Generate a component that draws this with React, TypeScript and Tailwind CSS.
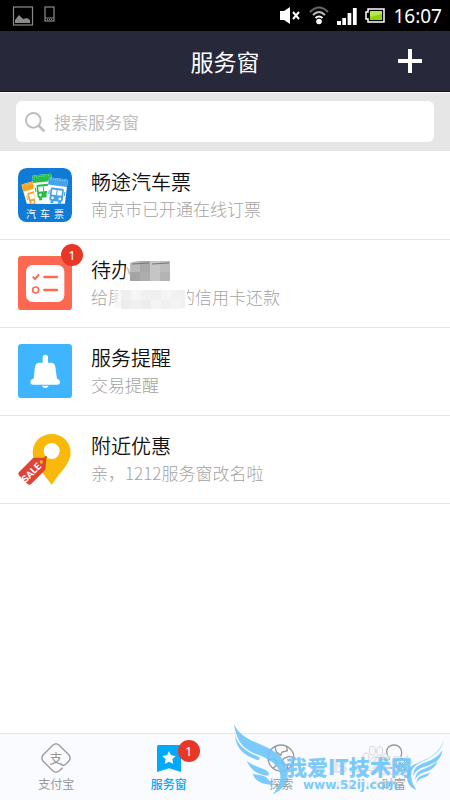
import {useState} from "react";
import type {ReactNode} from "react";

type Service = {
  id: string;
  title: ReactNode;
  detail: ReactNode;
  icon: ReactNode;
  badge?: number;
};

type Tab = {
  id: string;
  label: string;
  icon: ReactNode;
  badge?: number;
};

function StatusBar() {
  return (
    <div className="flex h-[31px] items-center bg-black pr-2 pl-3 text-white">
      <svg width="22" height="20" viewBox="0 0 22 20" aria-hidden="true">
        <rect x="1.5" y="1" width="19" height="18" fill="none" stroke="#8b8b8b" strokeWidth="1.2" />
        <path d="M3 17v-3l4-5 4 4 4-1 3 2v3z" fill="#8b8b8b" />
      </svg>
      <svg className="mb-1 ml-2.5" width="12" height="16" viewBox="0 0 12 16" aria-hidden="true">
        <rect x="1" y="1" width="9" height="14" fill="none" stroke="#8b8b8b" strokeWidth="1.2" />
        <path d="M1 12h9M3 13.5h1M5 13.5h1M7 13.5h1" stroke="#8b8b8b" />
      </svg>

      <div className="ml-auto flex items-center gap-2">
        <svg width="22" height="19" viewBox="0 0 22 19" aria-hidden="true">
          <path d="M1 5h4l6-4v17l-6-4H1z" fill="#fff" />
          <path d="M14 6l6 7M20 6l-6 7" stroke="#fff" strokeWidth="2" />
        </svg>
        <svg width="20" height="19" viewBox="0 0 20 19" fill="none" aria-hidden="true">
          <path d="M1 6q9-9 18 0" stroke="#686868" strokeWidth="2" />
          <path d="M4 9q6-6 12 0" stroke="#bbb" strokeWidth="2" />
          <path d="M6.5 12q3.5-3 7 0" stroke="#fff" strokeWidth="2" />
          <circle cx="10" cy="15.5" r="2.8" fill="#fff" />
        </svg>
        <svg width="20" height="18" viewBox="0 0 20 18" fill="#fff" aria-hidden="true">
          <path d="M0 14h4v4H0zM5.3 11H9v7H5.3zM10.6 6h3.7v12h-3.7zM15.9 1h3.8v17h-3.8z" />
        </svg>
        <svg width="20" height="15" viewBox="0 0 20 15" aria-hidden="true">
          <path d="M3 1h16v13H3v-3H1V4h2z" fill="none" stroke="#fff" strokeWidth="1.5" />
          <path d="M5 3h12v9H5z" fill="#8fd30c" />
          <path d="M5 3h12v3L5 9z" fill="#b5e654" />
        </svg>
        <time className="font-['Noto_Sans',sans-serif] text-[19px] leading-6">16:07</time>
      </div>
    </div>
  );
}

function Badge({count}: {count: number}) {
  return (
    <span className="flex size-[22px] items-center justify-center rounded-full bg-[#e73827] font-['Noto_Sans',sans-serif] text-[13px] leading-4 font-normal text-white">
      {count}
    </span>
  );
}

function TicketBus({color, x, y, turn}: {color: string; x: number; y: number; turn: number}) {
  return (
    <g transform={`translate(${x} ${y}) rotate(${turn})`}>
      <path d="M0 4q0-4 4-4h49q4 0 4 4v92H0z" fill="#fff" />
      <path d="M0 4q0-4 4-4h49q4 0 4 4v18H0z" fill={color} />
      <path d="M5 5h48" stroke="#fff" strokeWidth="2" strokeDasharray="2 5" />
      <rect x="9" y="29" width="40" height="40" rx="5" fill={color} />
      <path d="M14 35h30v15H14z" fill="#fff" />
      <path d="M29 35v15" stroke={color} strokeWidth="3" />
      <circle cx="18" cy="60" r="4" fill="#fff" />
      <circle cx="40" cy="60" r="4" fill="#fff" />
      <path d="M13 69h9v7h-9zM36 69h9v7h-9zM4 38h3v12H4zM51 38h3v12h-3z" fill={color} />
    </g>
  );
}

function CoachIcon() {
  return (
    <div className="relative size-[54px]">
      <svg className="size-full" viewBox="0 0 162 162" aria-hidden="true">
        <defs>
          <clipPath id="ticket-area">
            <path d="M0 0h162v107H0z" />
          </clipPath>
        </defs>
        <rect width="162" height="162" rx="26" fill="#107bd7" />
        <g clipPath="url(#ticket-area)">
          <TicketBus color="#f3a51f" x={10} y={50} turn={-16} />
          <TicketBus color="#28bd4a" x={43} y={23} turn={-6} />
          <TicketBus color="#45a3ec" x={93} y={28} turn={7} />
        </g>
      </svg>
      <span className="absolute inset-x-0 bottom-[2px] flex justify-center gap-1 text-[10px] leading-3 text-white">
        <span>汽</span>
        <span>车</span>
        <span>票</span>
      </span>
    </div>
  );
}

function TodoIcon() {
  return (
    <svg className="size-[54px]" viewBox="0 0 162 162" fill="none" aria-hidden="true">
      <rect width="162" height="162" rx="10" fill="#ff6850" />
      <rect x="24" y="27" width="115" height="111" rx="20" fill="#fff" />
      <path d="M44 62l7 7 12-14" stroke="#ff6850" strokeWidth="6" />
      <circle cx="53" cy="102" r="9" stroke="#ff6850" strokeWidth="5" />
      <path d="M79 63h38M79 102h38" stroke="#ff6850" strokeWidth="7" strokeLinecap="round" />
    </svg>
  );
}

function BellIcon() {
  return (
    <svg className="size-[54px]" viewBox="0 0 162 162" fill="#fff" aria-hidden="true">
      <rect width="162" height="162" rx="10" fill="#3fb5ff" />
      <path d="M74 56V40q0-8 8-8t8 8v16h9q11 0 13 12l5 36q8 1 9 9 0 9-9 9H46q-9 0-9-9 1-8 10-9l4-36q2-12 13-12z" />
      <path d="M72 125h20q-3 7-10 7t-10-7z" />
    </svg>
  );
}

function SaleIcon() {
  return (
    <svg className="size-[54px]" viewBox="0 0 162 162" aria-hidden="true">
      <path
        fillRule="evenodd"
        d="M101 6C69 6 44 30 44 62c0 35 36 63 57 97 20-34 57-63 57-97 0-32-25-56-57-56zm0 27a24 24 0 110 48 24 24 0 010-48z"
        fill="#f8b90b"
      />
      <path d="M46 77L4 119q-6 6 0 12l24 24q6 6 12 0l42-42 3-29q0-7-6-7z" fill="#df4335" />
      <path d="M71 91L84 75" stroke="#c94f1c" strokeWidth="6" strokeLinecap="round" />
      <circle cx="70" cy="90" r="5" fill="#f8b90b" />
      <text
        transform="translate(47 129) rotate(-45)"
        textAnchor="middle"
        fill="#fff"
        fontFamily="'Liberation Sans Narrow', Roboto, sans-serif"
        fontSize="29"
        fontWeight="700"
      >
        SALE
      </text>
    </svg>
  );
}

function HiddenTitle() {
  return (
    <span className="relative inline-block">
      待办
      <svg className="absolute top-1 left-[30px]" width="50" height="22" viewBox="0 0 50 22" aria-hidden="true">
        <path d="M5 6q3-3 5-4v20H3z" fill="#fff" fillOpacity="0.7" />
        <path d="M9 3q4-2 10-2v11H9z" fill="#b9b9b9" />
        <path d="M19 1h10v11H19z" fill="#a9a9a9" />
        <path d="M29 1h10v11H29z" fill="#c6c6c6" />
        <path d="M39 1h10v11H39z" fill="#bcbcbc" />
        <path d="M9 12h10v9H9z" fill="#a4a4a4" />
        <path d="M19 12h10v9H19z" fill="#adadad" />
        <path d="M29 12h10v9H29z" fill="#c5c5c5" />
        <path d="M39 12h10v9H39z" fill="#b4b4b4" />
        <path d="M11 4l17-1M31 4l17-1" stroke="#777" />
      </svg>
    </span>
  );
}

function HiddenDetail() {
  return (
    <span className="relative inline-flex">
      <span>给尾</span>
      <span className="w-[53px]" />
      <span>的信用卡还款</span>
      <svg className="absolute top-1 left-[20px]" width="84" height="32" viewBox="0 0 84 32" aria-hidden="true">
        <path d="M8 1h66q4 4 1 19-10 12-35 11Q14 30 4 18 6 10 8 1z" fill="#fff" fillOpacity="0.85" />
        <path d="M2 2h8v18H2z" fill="#f5f5f5" fillOpacity="0.6" />
        <path d="M10 2h10v10H10zM40 2h10v10H40z" fill="#efefef" />
        <path d="M20 2h10v10H20zM50 2h10v10H50z" fill="#f5f5f5" />
        <path d="M30 2h10v10H30zM60 2h10v10H60z" fill="#f1f1f1" />
        <path d="M10 12h10v9H10zM30 12h10v9H30z" fill="#ececec" />
        <path d="M20 12h10v9H20zM50 12h10v9H50z" fill="#f0f0f0" />
        <path d="M40 12h10v9H40zM60 12h10v9H60z" fill="#f4f4f4" />
        <path d="M70 2h4v18h-4z" fill="#f0f0f0" />
      </svg>
    </span>
  );
}

const services: Service[] = [
  {id: "coach", title: "畅途汽车票", detail: "南京市已开通在线订票", icon: <CoachIcon />},
  {id: "todo", title: <HiddenTitle />, detail: <HiddenDetail />, icon: <TodoIcon />, badge: 1},
  {id: "notice", title: "服务提醒", detail: "交易提醒", icon: <BellIcon />},
  {id: "nearby", title: "附近优惠", detail: "亲，1212服务窗改名啦", icon: <SaleIcon />},
];

const tabs: Tab[] = [
  {
    id: "alipay",
    label: "支付宝",
    icon: (
      <svg className="size-[30px]" viewBox="0 0 90 90" fill="none" aria-hidden="true">
        <path
          d="M64 75L54 84q-9 7-18 0L6 54q-7-9 0-18L36 6q9-7 18 0l30 30q7 9 0 18L74 64q-6 5-14 1"
          stroke="currentColor"
          strokeWidth="4"
          strokeLinecap="round"
        />
        <text x="45" y="59" textAnchor="middle" fill="currentColor" fontSize="39">
          支
        </text>
      </svg>
    ),
  },
  {
    id: "service",
    label: "服务窗",
    badge: 1,
    icon: (
      <svg className="h-[27px] w-6" viewBox="0 0 72 81" aria-hidden="true">
        <path d="M5 0h62q5 0 5 5v76L36 70 0 81V5q0-5 5-5z" fill="#02a9f9" />
        <path d="M36 18l6 13 14 2-10 10 3 14-13-7-13 7 3-14-10-10 14-2z" fill="#fff" />
      </svg>
    ),
  },
  {
    id: "explore",
    label: "探索",
    icon: (
      <svg className="size-7" viewBox="0 0 84 84" fill="none" stroke="currentColor" strokeWidth="4" aria-hidden="true">
        <circle cx="42" cy="42" r="39" />
        <path d="M24 8l4 16 13 10 4-10 16-4-2-13M4 48l15-4 12 10-3 10-10 9M80 40l-14-3-15 6-8 10 8 10 11-1-1 13" />
      </svg>
    ),
  },
  {
    id: "wealth",
    label: "财富",
    icon: (
      <svg className="size-7" viewBox="0 0 84 84" fill="none" stroke="currentColor" strokeWidth="4" aria-hidden="true">
        <path d="M29 45C8 18 28 3 42 3c16 0 29 15 20 36M29 45Q9 51 4 72h34" />
        <circle cx="65" cy="61" r="18" />
        <path d="M56 52l9 9 9-9M55 61h20M55 69h20M65 61v15" strokeWidth="3" />
      </svg>
    ),
  },
];

function Watermark() {
  return (
    <div className="pointer-events-none absolute right-0 bottom-0 h-[85px] w-[225px] whitespace-nowrap">
      <svg className="absolute inset-0 size-full" viewBox="0 0 675 255" aria-hidden="true">
        <g fill="#f6f6f8" fillOpacity="0.7" stroke="#d4d5d9" strokeWidth="3">
          <ellipse cx="423" cy="127" rx="9" ry="13" />
          <ellipse cx="442" cy="107" rx="9" ry="13" />
          <ellipse cx="464" cy="108" rx="9" ry="13" />
          <ellipse cx="481" cy="130" rx="9" ry="13" />
          <path d="M452 125q12 0 18 15 17 14 8 25-26 6-52 0-9-11 8-25 6-15 18-15z" />
        </g>
      </svg>
      <span className="absolute top-[39px] left-[108px] font-['Liberation_Sans','Noto_Sans_CJK_SC',sans-serif] text-[21px] leading-6 font-bold text-[#dcdde2]/70">
        Bai 经验
      </span>
      <span className="absolute top-[60px] left-[109px] font-['Liberation_Sans',sans-serif] text-[11px] leading-4 text-[#dcdde2]/80">
        jingyan.baidu
      </span>
      <svg className="absolute inset-0 size-full" viewBox="0 0 675 255" fill="#6cc5fb" fillOpacity="0.9" aria-hidden="true">
        <path d="M27 27c18 40 52 48 90 66 49 20 77 54 70 93-4 26-22 43-44 52 20-24 26-41 22-64-8-31-45-48-80-60C50 98 33 72 27 27z" />
        <path d="M30 60c8 30 32 50 72 66 4 3 2 9-4 9-38-11-66-34-68-75z" />
        <path d="M65 137c15 14 34 18 50 25 13 5 20 12 15 20-30-1-54-17-65-45z" />
        <path d="M83 177c18 3 34 3 43 12 6 8 14 17 22 20-29 1-56-7-65-32z" />
        <path d="M657 77c-9 31-34 49-66 63-29 13-38 32-31 52 2 12 7 23 15 33-22-7-32-26-28-50 8-44 78-24 110-98z" />
        <path d="M652 106c-2 26-22 39-44 46-25 7-37 15-43 31-1-22 13-33 37-41 22-8 37-17 50-36z" />
        <path d="M637 138c-4 18-18 27-37 33-15 4-23 10-29 23 0-19 11-28 28-33 16-6 27-12 38-23z" />
        <path d="M616 172c-4 9-11 14-23 17-9 3-14 7-18 15 0-13 7-20 18-23 9-3 16-5 23-9z" />
      </svg>
      <span className="absolute top-[37px] left-[61px] text-[21px] leading-7 font-black text-[#6cc5fb]/90">
        我爱IT技术网
      </span>
      <span className="absolute top-[62px] left-[78px] font-['DejaVu_Sans',sans-serif] text-[12px] leading-4 font-bold text-[#6cc5fb]/90">
        www.52ij.com
      </span>
    </div>
  );
}

export default function App() {
  const [query, setQuery] = useState("");
  const [activeTab, setActiveTab] = useState("service");

  return (
    <div className="flex min-h-screen flex-col bg-white font-['Noto_Sans_CJK_SC',sans-serif]" lang="zh-CN">
      <StatusBar />

      <header className="grid h-[61px] grid-cols-[1fr_auto_1fr] items-center border-b border-[#11122b] bg-[#27293b] px-6 text-white">
        <h1 className="col-start-2 text-[23px] leading-8">服务窗</h1>
        <button type="button" aria-label="添加" className="justify-self-end p-1">
          <svg className="size-6" viewBox="0 0 24 24" aria-hidden="true">
            <path d="M12 0v24M0 12h24" stroke="#fff" strokeWidth="4" />
          </svg>
        </button>
      </header>

      <form role="search" className="border-t border-white bg-[#e6e6e6] px-4 pt-2 pb-[9px]" onSubmit={(event) => event.preventDefault()}>
        <label className="flex h-[41px] items-center gap-2 rounded-md bg-white px-2">
          <svg className="size-[22px] shrink-0" viewBox="0 0 66 66" fill="none" stroke="#bdbdbd" strokeWidth="6" aria-hidden="true">
            <circle cx="28" cy="28" r="22" />
            <path d="M44 44l17 17" strokeWidth="8" />
          </svg>
          <input
            type="search"
            aria-label="搜索服务窗"
            placeholder="搜索服务窗"
            value={query}
            onChange={(event) => setQuery(event.target.value)}
            className="min-w-0 flex-1 text-[17px] leading-6 text-[#222] outline-none placeholder:text-[#bdbdbd]"
          />
        </label>
      </form>

      <main className="flex-1 pt-px">
        <ul>
          {services.map((service) => (
            <li key={service.id} className="border-b border-[#e4e4e4]">
              <a href={`#${service.id}`} className="flex h-[87px] items-center gap-[19px] px-[18px] pb-0.5">
                <span className="relative shrink-0">
                  {service.icon}
                  {service.badge ? (
                    <span className="absolute -top-3 -right-[11px]">
                      <Badge count={service.badge} />
                    </span>
                  ) : null}
                </span>
                <span className="min-w-0 flex-1">
                  <span className="block text-[20px] leading-7 font-[350] text-[#111]">{service.title}</span>
                  <span className="block text-[17px] leading-[26px] font-light text-[#a3a3a3]">{service.detail}</span>
                </span>
              </a>
            </li>
          ))}
        </ul>
      </main>

      <nav className="relative grid h-[67px] grid-cols-4 border-t border-[#e4e4e6] bg-[#fafbff]">
        {tabs.map((tab) => (
          <button
            key={tab.id}
            type="button"
            aria-current={tab.id === activeTab ? "page" : undefined}
            onClick={() => setActiveTab(tab.id)}
            className={`flex flex-col items-center pt-2 ${tab.id === activeTab ? "font-medium text-[#02a9f9]" : "text-[#999]"}`}
          >
            <span className="relative flex h-8 items-center">
              {tab.icon}
              {tab.badge ? (
                <span className="absolute -top-[2px] -right-[19px]">
                  <Badge count={tab.badge} />
                </span>
              ) : null}
            </span>
            <span className="text-[12px] leading-5">{tab.label}</span>
          </button>
        ))}
        <Watermark />
      </nav>
    </div>
  );
}
